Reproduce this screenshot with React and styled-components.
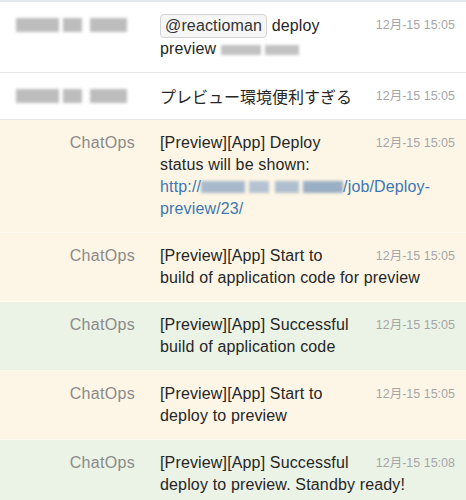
import React from "react";
import styled, { createGlobalStyle } from "styled-components";

const Global = createGlobalStyle`
  html, body { margin: 0; padding: 0; background: #fff; }
  body { font-family: "Liberation Sans", Arial, Helvetica, sans-serif; }
`;

const List = styled.div`
  width: 466px;
  border-top: 2px solid #e4e9f1;
`;

const bgs = { plain: "#ffffff", info: "#fdf6e6", success: "#ebf3e6" };
const lines = { plain: "#e6e6e6", info: "#fffaf2", success: "#f6faf3" };

const Row = styled.div`
  display: grid;
  grid-template-columns: 135px 1fr;
  column-gap: 25px;
  padding: 12px 11px 12px 0;
  background: ${(p) => bgs[p.$kind]};
  border-bottom: 1px solid ${(p) => lines[p.$kind]};
`;

const Name = styled.div`
  text-align: right;
  font-size: 16px;
  line-height: 22px;
  color: #8a8a8a;
  letter-spacing: 0.3px;
`;

const Redacted = styled.div`
  display: flex;
  justify-content: flex-end;
  align-items: center;
  height: 22px;
  padding-right: 8px;
  filter: blur(1.8px);
`;

const Blob = styled.span`
  display: inline-block;
  width: ${(p) => p.$w}px;
  height: ${(p) => p.$h || 14}px;
  margin-left: ${(p) => p.$ml || 0}px;
  background: ${(p) => p.$c || "#bdbdbd"};
`;

const Body = styled.div`
  font-size: 16px;
  line-height: 22px;
  color: #262626;
  letter-spacing: 0.15px;
`;

const Time = styled.span`
  float: right;
  width: 100px;
  text-align: right;
  font-size: 12.5px;
  line-height: 22px;
  color: #a6a6a6;
  letter-spacing: 0;
  font-family: "Liberation Sans", "Noto Sans CJK JP", sans-serif;
`;

const Mention = styled.span`
  display: inline-block;
  padding: 1px 4px;
  line-height: 20px;
  border: 1px solid #d4d4d4;
  border-radius: 4px;
  background: #f6f6f6;
  color: #333;
`;

const Link = styled.a`
  color: #3d76b3;
  text-decoration: none;
`;

const NoWrap = styled.span`
  white-space: nowrap;
`;

const InlineBlur = styled.span`
  display: inline-flex;
  vertical-align: -1px;
  line-height: 0;
  filter: blur(1.4px);
`;

const JP = styled.span`
  display: inline-block;
  vertical-align: top;
  line-height: 22px;
  font-family: "Noto Sans CJK JP", sans-serif;
  letter-spacing: 0;
`;

const BlurName = () => (
  <Redacted>
    <Blob $w={43} />
    <Blob $w={19} $ml={4} />
    <Blob $w={37} $ml={8} />
  </Redacted>
);

const rows = [
  {
    kind: "plain",
    name: null,
    time: "12月-15 15:05",
    body: (
      <>
        <Mention>@reactioman</Mention> deploy preview{" "}
        <InlineBlur>
          <Blob $w={40} $h={10} $c="#c2c2c2" />
          <Blob $w={34} $h={10} $ml={4} $c="#c2c2c2" />
        </InlineBlur>
      </>
    ),
  },
  {
    kind: "plain",
    name: null,
    time: "12月-15 15:05",
    body: <JP>プレビュー環境便利すぎる</JP>,
  },
  {
    kind: "info",
    name: "ChatOps",
    time: "12月-15 15:05",
    body: (
      <>
        [Preview][App] Deploy status will be shown:{" "}
        <Link href="#">
          <NoWrap>
            http://
            <InlineBlur>
              <Blob $w={44} $h={12} $c="#a9b9cc" />
              <Blob $w={20} $h={12} $ml={4} $c="#b5c2d2" />
              <Blob $w={24} $h={12} $ml={6} $c="#b0bfcf" />
              <Blob $w={40} $h={12} $ml={4} $c="#9aaec4" />
            </InlineBlur>
            /job/Deploy-
          </NoWrap>
          preview/23/
        </Link>
      </>
    ),
  },
  {
    kind: "info",
    name: "ChatOps",
    time: "12月-15 15:05",
    body: "[Preview][App] Start to build of application code for preview",
  },
  {
    kind: "success",
    name: "ChatOps",
    time: "12月-15 15:05",
    body: "[Preview][App] Successful build of application code",
  },
  {
    kind: "info",
    name: "ChatOps",
    time: "12月-15 15:05",
    body: "[Preview][App] Start to deploy to preview",
  },
  {
    kind: "success",
    name: "ChatOps",
    time: "12月-15 15:08",
    body: "[Preview][App] Successful deploy to preview. Standby ready!",
  },
];

export default function App() {
  return (
    <>
      <Global />
      <List>
        {rows.map((r, i) => (
          <Row key={i} $kind={r.kind}>
            {r.name ? <Name>{r.name}</Name> : <BlurName />}
            <Body>
              <Time>{r.time}</Time>
              {r.body}
            </Body>
          </Row>
        ))}
      </List>
    </>
  );
}
